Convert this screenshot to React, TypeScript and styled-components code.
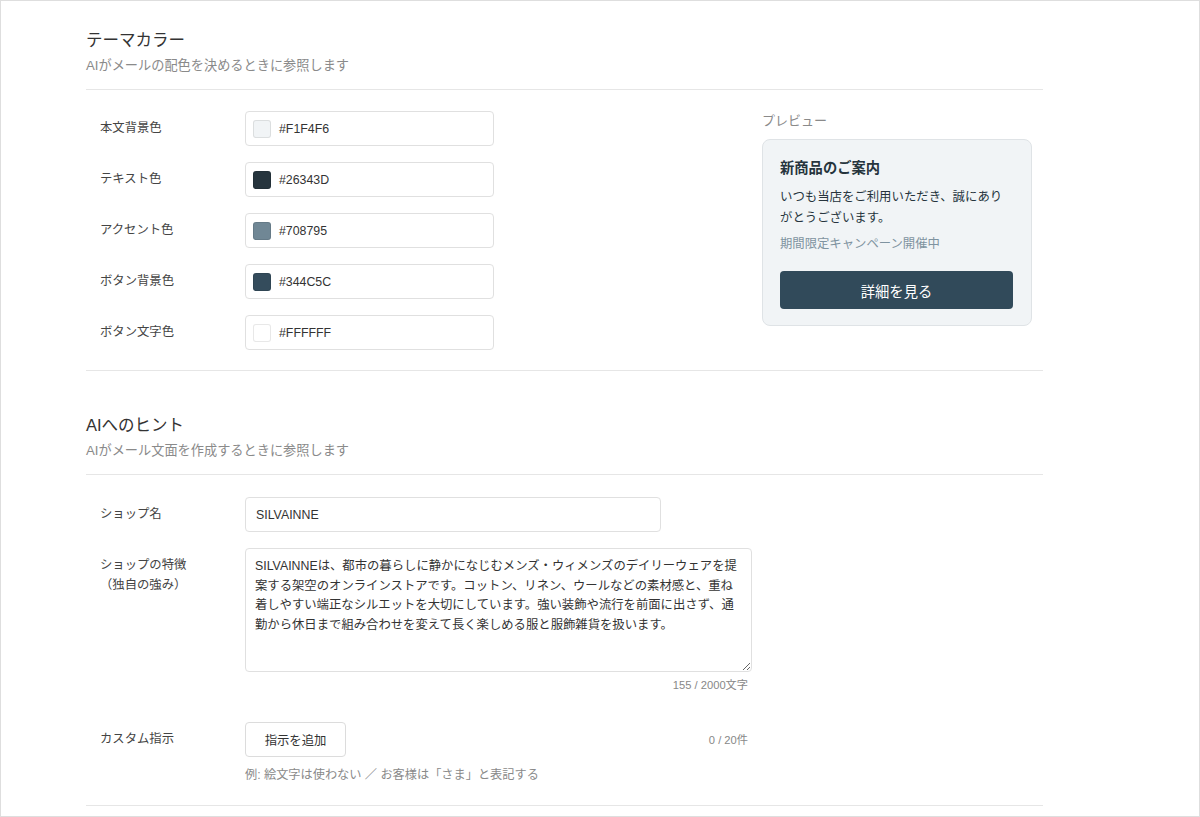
import * as React from 'react'
import styled, { createGlobalStyle } from 'styled-components'

interface IThemeColor {
  label: string
  value: string
}

const themeColors: IThemeColor[] = [
  { label: '本文背景色', value: '#F1F4F6' },
  { label: 'テキスト色', value: '#26343D' },
  { label: 'アクセント色', value: '#708795' },
  { label: 'ボタン背景色', value: '#344C5C' },
  { label: 'ボタン文字色', value: '#FFFFFF' },
]

const shopFeature =
  'SILVAINNEは、都市の暮らしに静かになじむメンズ・ウィメンズのデイリーウェアを提案する架空のオンラインストアです。コットン、リネン、ウールなどの素材感と、重ね着しやすい端正なシルエットを大切にしています。強い装飾や流行を前面に出さず、通勤から休日まで組み合わせを変えて長く楽しめる服と服飾雑貨を扱います。'

const App: React.FC = () => (
  <>
    <GlobalStyle />
    <Frame>
      <Section>
        <SectionHeader>
          <SectionTitle>テーマカラー</SectionTitle>
          <SectionLead>AIがメールの配色を決めるときに参照します</SectionLead>
        </SectionHeader>
        <ColorBody>
          <FieldList>
            {themeColors.map((c) => (
              <FieldRow key={c.label}>
                <FieldLabel>{c.label}</FieldLabel>
                <ColorInput>
                  <Swatch $color={c.value} />
                  <ColorCode>{c.value}</ColorCode>
                </ColorInput>
              </FieldRow>
            ))}
          </FieldList>
          <Preview>
            <PreviewLabel>プレビュー</PreviewLabel>
            <MailCard>
              <MailTitle>新商品のご案内</MailTitle>
              <MailText>いつも当店をご利用いただき、誠にありがとうございます。</MailText>
              <MailLink>期間限定キャンペーン開催中</MailLink>
              <MailButton>詳細を見る</MailButton>
            </MailCard>
          </Preview>
        </ColorBody>
      </Section>

      <Section>
        <SectionHeader>
          <SectionTitle>AIへのヒント</SectionTitle>
          <SectionLead>AIがメール文面を作成するときに参照します</SectionLead>
        </SectionHeader>
        <HintBody>
          <FieldRow>
            <FieldLabel>ショップ名</FieldLabel>
            <TextInput defaultValue="SILVAINNE" />
          </FieldRow>
          <FieldRow $top>
            <FieldLabel $top>
              ショップの特徴
              <br />
              （独自の強み）
            </FieldLabel>
            <Control>
              <TextArea defaultValue={shopFeature} />
              <Counter>155 / 2000文字</Counter>
            </Control>
          </FieldRow>
          <CustomRow>
            <FieldLabel>カスタム指示</FieldLabel>
            <Control>
              <ActionLine>
                <AddButton>指示を追加</AddButton>
                <Counter $inline>0 / 20件</Counter>
              </ActionLine>
              <Hint>例: 絵文字は使わない ／ お客様は「さま」と表記する</Hint>
            </Control>
          </CustomRow>
        </HintBody>
      </Section>
    </Frame>
  </>
)

const GlobalStyle = createGlobalStyle`
  * { box-sizing: border-box; }
  body {
    margin: 0;
    background: #fff;
    font-family: "Liberation Sans", "Noto Sans CJK JP", sans-serif;
    color: #333;
  }
`

const Frame = styled.div`
  height: 817px;
  border: 1px solid #dedede;
  padding: 0 156px 0 85px;
  overflow: hidden;
`

const Section = styled.section`
  & + & {
    margin-top: 15px;
  }
`

const SectionHeader = styled.header`
  padding: 27px 0 13px;
  border-bottom: 1px solid #e6e6e6;
`

const SectionTitle = styled.h2`
  margin: 0;
  font-size: 16.5px;
  line-height: 24px;
  font-weight: 400;
  color: #333;
`

const SectionLead = styled.p`
  margin: 4px 0 0;
  font-size: 13.2px;
  line-height: 20px;
  color: #8a8a8a;
`

const ColorBody = styled.div`
  display: flex;
  justify-content: space-between;
  padding: 21px 11px 20px 0;
  border-bottom: 1px solid #e6e6e6;
`

const FieldList = styled.div`
  display: flex;
  flex-direction: column;
  gap: 16px;
`

const FieldRow = styled.div<{ $top?: boolean }>`
  display: grid;
  grid-template-columns: 145px auto;
  align-items: ${(p) => (p.$top ? 'start' : 'center')};
  padding-left: 14px;
`

const FieldLabel = styled.div<{ $top?: boolean }>`
  font-size: 12.35px;
  line-height: 19.5px;
  color: #444;
  padding-top: ${(p) => (p.$top ? '8px' : '0')};
`

const ColorInput = styled.div`
  display: flex;
  align-items: center;
  gap: 8px;
  width: 249px;
  height: 35px;
  padding: 0 7px;
  border: 1px solid #e0e0e0;
  border-radius: 4px;
  background: #fff;
`

const Swatch = styled.span<{ $color: string }>`
  width: 18px;
  height: 18px;
  border-radius: 3px;
  background: ${(p) => p.$color};
  border: 1px solid rgba(0, 0, 0, 0.09);
`

const ColorCode = styled.span`
  font-size: 12.35px;
  color: #333;
`

const Preview = styled.div`
  width: 270px;
  padding-top: 1px;
`

const PreviewLabel = styled.div`
  font-size: 13px;
  line-height: 18px;
  color: #8a8a8a;
`

const MailCard = styled.div`
  margin-top: 9px;
  padding: 18px 18px 16px 17px;
  background: #f1f4f6;
  border: 1px solid #dfe3e6;
  border-radius: 8px;
  color: #26343d;
`

const MailTitle = styled.div`
  font-size: 14.3px;
  line-height: 20px;
  font-weight: 700;
`

const MailText = styled.p`
  margin: 9px 0 0;
  font-size: 12.4px;
  line-height: 20.5px;
`

const MailLink = styled.div`
  margin-top: 7px;
  font-size: 12.35px;
  line-height: 18px;
  color: #7f93a0;
`

const MailButton = styled.button`
  display: block;
  width: 100%;
  height: 38px;
  margin-top: 18px;
  border: none;
  border-radius: 4px;
  background: #314a5a;
  color: #fff;
  font-family: inherit;
  font-size: 14.3px;
`

const HintBody = styled.div`
  display: flex;
  flex-direction: column;
  gap: 16px;
  padding: 22px 0 21px;
  border-bottom: 1px solid #e6e6e6;
`

const TextInput = styled.input`
  width: 416px;
  height: 35px;
  padding: 0 10px;
  border: 1px solid #e0e0e0;
  border-radius: 4px;
  font-family: inherit;
  font-size: 12.35px;
  color: #333;
  outline: none;
`

const Control = styled.div`
  display: flex;
  flex-direction: column;
  width: 507px;
`

const TextArea = styled.textarea`
  display: block;
  width: 507px;
  height: 124px;
  padding: 8px 9px;
  border: 1px solid #e0e0e0;
  border-radius: 4px;
  font-family: inherit;
  font-size: 12.35px;
  line-height: 19.5px;
  color: #333;
  resize: vertical;
  outline: none;
`

const Counter = styled.div<{ $inline?: boolean }>`
  margin-top: ${(p) => (p.$inline ? '0' : '6px')};
  padding-right: 4px;
  text-align: right;
  font-size: 11.2px;
  line-height: 14px;
  color: #888;
`

const CustomRow = styled(FieldRow)`
  align-items: start;
  margin-top: 14px;

  & > ${FieldLabel} {
    padding-top: 8px;
  }
`

const ActionLine = styled.div`
  display: flex;
  align-items: center;
  justify-content: space-between;
`

const AddButton = styled.button`
  width: 101px;
  height: 35px;
  border: 1px solid #dcdcdc;
  border-radius: 4px;
  background: #fff;
  font-family: inherit;
  font-size: 12.35px;
  color: #333;
`

const Hint = styled.p`
  margin: 9px 0 0;
  font-size: 12.2px;
  line-height: 18px;
  color: #8a8a8a;
`

export default App
